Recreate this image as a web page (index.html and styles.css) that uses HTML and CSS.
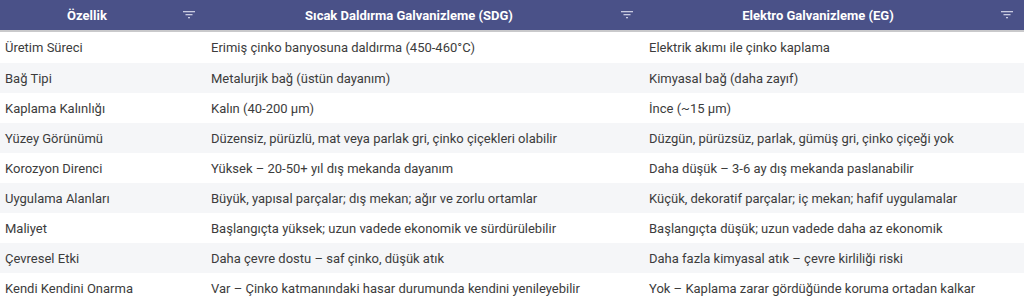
FILE: index.html
```html
<!DOCTYPE html>
<html lang="tr">
<head>
<meta charset="utf-8">
<link rel="stylesheet" href="styles.css">
</head>
<body>
<table class="grid">
  <colgroup><col class="c1"><col class="c2"><col class="c3"></colgroup>
  <thead>
    <tr>
      <th><div class="hd"><span class="ht">Özellik</span><span class="flt"><svg width="12" height="8" viewBox="0 0 12 8"><rect x="0" y="0" width="12" height="1.3"/><rect x="2.5" y="3" width="7" height="1.3"/><rect x="5" y="6" width="2" height="1.3"/></svg></span></div></th>
      <th><div class="hd"><span class="ht">Sıcak Daldırma Galvanizleme (SDG)</span><span class="flt"><svg width="12" height="8" viewBox="0 0 12 8"><rect x="0" y="0" width="12" height="1.3"/><rect x="2.5" y="3" width="7" height="1.3"/><rect x="5" y="6" width="2" height="1.3"/></svg></span></div></th>
      <th><div class="hd"><span class="ht">Elektro Galvanizleme (EG)</span><span class="flt"><svg width="12" height="8" viewBox="0 0 12 8"><rect x="0" y="0" width="12" height="1.3"/><rect x="2.5" y="3" width="7" height="1.3"/><rect x="5" y="6" width="2" height="1.3"/></svg></span></div></th>
    </tr>
  </thead>
  <tbody>
    <tr><td>Üretim Süreci</td><td>Erimiş çinko banyosuna daldırma (450-460°C)</td><td>Elektrik akımı ile çinko kaplama</td></tr>
    <tr><td>Bağ Tipi</td><td>Metalurjik bağ (üstün dayanım)</td><td>Kimyasal bağ (daha zayıf)</td></tr>
    <tr><td>Kaplama Kalınlığı</td><td>Kalın (40-200 µm)</td><td>İnce (~15 µm)</td></tr>
    <tr><td>Yüzey Görünümü</td><td>Düzensiz, pürüzlü, mat veya parlak gri, çinko çiçekleri olabilir</td><td>Düzgün, pürüzsüz, parlak, gümüş gri, çinko çiçeği yok</td></tr>
    <tr><td>Korozyon Direnci</td><td>Yüksek – 20-50+ yıl dış mekanda dayanım</td><td>Daha düşük – 3-6 ay dış mekanda paslanabilir</td></tr>
    <tr><td>Uygulama Alanları</td><td>Büyük, yapısal parçalar; dış mekan; ağır ve zorlu ortamlar</td><td>Küçük, dekoratif parçalar; iç mekan; hafif uygulamalar</td></tr>
    <tr><td>Maliyet</td><td>Başlangıçta yüksek; uzun vadede ekonomik ve sürdürülebilir</td><td>Başlangıçta düşük; uzun vadede daha az ekonomik</td></tr>
    <tr><td>Çevresel Etki</td><td>Daha çevre dostu – saf çinko, düşük atık</td><td>Daha fazla kimyasal atık – çevre kirliliği riski</td></tr>
    <tr><td>Kendi Kendini Onarma</td><td>Var – Çinko katmanındaki hasar durumunda kendini yenileyebilir</td><td>Yok – Kaplama zarar gördüğünde koruma ortadan kalkar</td></tr>
  </tbody>
</table>
</body>
</html>
```

FILE: styles.css
```css
html, body {
  margin: 0;
  padding: 0;
  background: #ffffff;
  overflow: hidden;
}
body {
  font-family: Roboto, "Liberation Sans", sans-serif;
  font-size: 13px;
  color: #3c3c3c;
}
.grid {
  width: 1024px;
  border-collapse: collapse;
  table-layout: fixed;
}
.c1 { width: 206px; }
.c2 { width: 438px; }
.c3 { width: 380px; }
thead th {
  background: #4a5188;
  color: #ffffff;
  font-weight: 700;
  height: 30px;
  padding: 0;
  border-bottom: 2px solid #c9c9cb;
}
.hd {
  display: flex;
  align-items: center;
  height: 30px;
}
.ht {
  flex: 1;
  text-align: center;
}
.flt {
  width: 30px;
  display: flex;
  justify-content: center;
  align-items: center;
  margin-right: 2px;
}
.flt svg { fill: #c9cbe0; display: block; }
tbody td {
  height: 30px;
  padding: 0 5px;
  white-space: nowrap;
  overflow: hidden;
}
tbody tr:nth-child(even) td { background: #f5f6f8; }
tbody tr:first-child td { height: 31px; padding-top: 0; }
```
